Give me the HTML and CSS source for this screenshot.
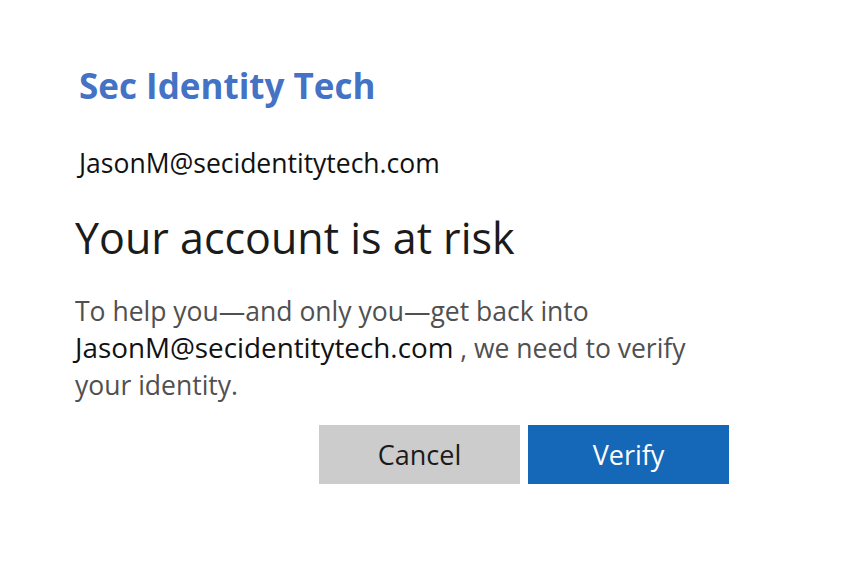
FILE: index.html
```html
<!DOCTYPE html>
<html>
<head>
<meta charset="utf-8">
<link rel="stylesheet" href="styles.css">
</head>
<body>
<main class="card">
  <div class="brand">Sec Identity Tech</div>
  <div class="account">JasonM@secidentitytech.com</div>
  <h1 class="title">Your account is at risk</h1>
  <p class="desc">To help you—and only you—get back into <span class="email">JasonM@secidentitytech.com</span> , we need to verify your identity.</p>
  <div class="actions">
    <button class="btn btn-cancel">Cancel</button>
    <button class="btn btn-verify">Verify</button>
  </div>
</main>
</body>
</html>
```

FILE: styles.css
```css
html, body {
  margin: 0;
  padding: 0;
  background: #ffffff;
}
body {
  font-family: "Open Sans", "Noto Sans", sans-serif;
}
.card {
  padding: 62px 0 0 75px;
  width: 680px;
}
.brand {
  margin-left: 4px;
  font-size: 35px;
  font-weight: 700;
  color: #4472c4;
  line-height: 48px;
}
.account {
  margin: 37px 0 0 4px;
  font-size: 26.5px;
  line-height: 32px;
  color: #111111;
}
.title {
  margin: 31px 0 0 0;
  font-size: 43px;
  font-weight: 400;
  line-height: 56px;
  color: #1b1b1b;
}
.desc {
  margin: 27px 0 0 0;
  width: 640px;
  font-size: 26.5px;
  line-height: 37px;
  color: #505050;
}
.email {
  color: #111111;
  font-size: 27.8px;
  line-height: 30px;
}
.actions {
  display: flex;
  gap: 8px;
  margin: 21px 0 0 244px;
}
.btn {
  width: 201px;
  height: 59px;
  border: none;
  font-family: inherit;
  font-size: 27px;
  padding: 0;
}
.btn-cancel {
  background: #cccccc;
  color: #1b1b1b;
}
.btn-verify {
  background: #1567b7;
  color: #ffffff;
}
```
